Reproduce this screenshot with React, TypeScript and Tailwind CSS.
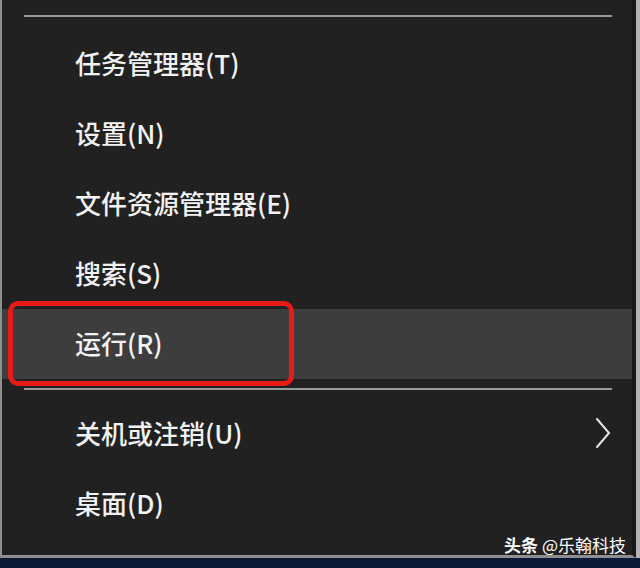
const items = [
  { label: '任务管理器(T)' },
  { label: '设置(N)' },
  { label: '文件资源管理器(E)' },
  { label: '搜索(S)' },
  { label: '运行(R)', active: true },
];

const lower = [
  { label: '关机或注销(U)', sub: true },
  { label: '桌面(D)' },
];

const font = { fontFamily: '"Noto Sans CJK SC", "Noto Sans", sans-serif' };

const Row = ({ label, active, sub }: { label: string; active?: boolean; sub?: boolean }) => (
  <div
    className={`flex h-[70px] shrink-0 items-center justify-between pb-[2px] pl-[73px] pr-[26px] text-[26px] font-medium text-[#f2f2f2] ${
      active ? 'bg-[#3d3d3d]' : ''
    }`}
  >
    <span className="leading-none">{label}</span>
    {sub && (
      <svg width="18" height="32" viewBox="0 0 18 32" fill="none" className="mr-[-6px]">
        <path d="M3 2 L15 16 L3 30" stroke="#e6e6e6" strokeWidth="2" strokeLinecap="round" />
      </svg>
    )}
  </div>
);

const App = () => {
  return (
    <div className="flex h-[568px] w-[640px] flex-col overflow-hidden bg-[#0b1a36]" style={font}>
      <div className="flex h-[558px] shrink-0">
        {/* menu */}
        <div className="relative flex w-[636px] flex-col border-b-[3px] border-l-2 border-r-4 border-[#8f8f8f] border-r-[#191919] bg-[#212121]">
          <div className="ml-[22px] mr-[20px] mt-[15px] h-[2px] shrink-0 bg-[#9a9a9a]" />
          <div className="mt-[12px] flex shrink-0 flex-col">
            {items.map((it) => (
              <Row key={it.label} {...it} />
            ))}
          </div>
          <div className="ml-[22px] mr-[20px] mt-[9px] h-[2px] shrink-0 bg-[#9a9a9a]" />
          <div className="mt-[9px] flex shrink-0 flex-col">
            {lower.map((it) => (
              <Row key={it.label} {...it} />
            ))}
          </div>
          {/* watermark */}
          <div className="absolute bottom-0 right-[6px] text-[17px] leading-[20px] text-white">
            <span className="font-bold">头条</span> @乐翰科技
          </div>
          {/* red highlight box */}
          <div className="absolute left-[6px] top-[301px] h-[85px] w-[286px] rounded-[10px] border-[5px] border-[#e41b17]" />
        </div>
        <div className="w-[4px] bg-[#b4b4b4]" />
      </div>
    </div>
  );
};

export default App;
